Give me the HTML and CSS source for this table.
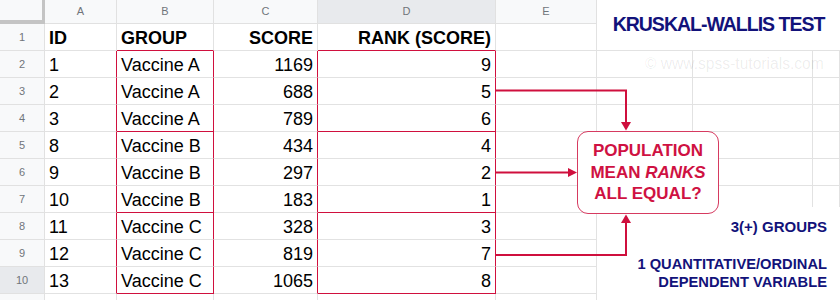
FILE: index.html
```html
<!DOCTYPE html>
<html>
<head>
<meta charset="utf-8">
<link rel="stylesheet" href="styles.css">
</head>
<body>
<div class="stage">
  <div class="sheet">
    <div class="corner"></div>
    <div class="ch">A</div><div class="ch">B</div><div class="ch">C</div><div class="ch sel">D</div><div class="ch">E</div><div class="ch blank"></div><div class="ch blank"></div><div class="ch blank"></div>

    <div class="rh">1</div>
    <div class="c b">ID</div><div class="c b rb">GROUP</div><div class="c b r">SCORE</div><div class="c b r rb">RANK (SCORE)</div><div class="c"></div><div class="c"></div><div class="c"></div><div class="c"></div>

    <div class="rh">2</div>
    <div class="c rr">1</div><div class="c rr">Vaccine A</div><div class="c r rr">1169</div><div class="c r rr">9</div><div class="c"></div><div class="c"></div><div class="c"></div><div class="c"></div>

    <div class="rh">3</div>
    <div class="c rr">2</div><div class="c rr">Vaccine A</div><div class="c r rr">688</div><div class="c r rr">5</div><div class="c"></div><div class="c"></div><div class="c"></div><div class="c"></div>

    <div class="rh">4</div>
    <div class="c rr">3</div><div class="c rr rb">Vaccine A</div><div class="c r rr">789</div><div class="c r rr rb">6</div><div class="c"></div><div class="c"></div><div class="c"></div><div class="c"></div>

    <div class="rh">5</div>
    <div class="c rr">8</div><div class="c rr">Vaccine B</div><div class="c r rr">434</div><div class="c r rr">4</div><div class="c"></div><div class="c"></div><div class="c"></div><div class="c"></div>

    <div class="rh">6</div>
    <div class="c rr">9</div><div class="c rr">Vaccine B</div><div class="c r rr">297</div><div class="c r rr">2</div><div class="c"></div><div class="c"></div><div class="c"></div><div class="c"></div>

    <div class="rh">7</div>
    <div class="c rr">10</div><div class="c rr rb">Vaccine B</div><div class="c r rr">183</div><div class="c r rr rb">1</div><div class="c"></div><div class="c"></div><div class="c"></div><div class="c"></div>

    <div class="rh">8</div>
    <div class="c rr">11</div><div class="c rr">Vaccine C</div><div class="c r rr">328</div><div class="c r rr">3</div><div class="c"></div><div class="c"></div><div class="c"></div><div class="c"></div>

    <div class="rh">9</div>
    <div class="c rr">12</div><div class="c rr">Vaccine C</div><div class="c r rr">819</div><div class="c r rr">7</div><div class="c"></div><div class="c"></div><div class="c"></div><div class="c"></div>

    <div class="rh sel">10</div>
    <div class="c rr">13</div><div class="c rr rb">Vaccine C</div><div class="c r rr">1065</div><div class="c r rr rb">8</div><div class="c"></div><div class="c"></div><div class="c"></div><div class="c"></div>

    <div class="rh"></div>
    <div class="c"></div><div class="c"></div><div class="c"></div><div class="c"></div><div class="c"></div><div class="c"></div><div class="c"></div><div class="c"></div>
  </div>

  <div class="title">KRUSKAL-WALLIS TEST</div>
  <div class="watermark">© www.spss-tutorials.com</div>

  <div class="notes">
    <p class="n1">3(+) GROUPS</p>
    <p class="n2">1 QUANTITATIVE/ORDINAL<br>DEPENDENT VARIABLE</p>
  </div>

  <div class="hyp"><div class="hyp-text">POPULATION<br>MEAN <i>RANKS</i><br>ALL EQUAL?</div></div>

  <svg class="arrows" width="840" height="300" viewBox="0 0 840 300">
    <g fill="none" stroke="#cf0f3d" stroke-width="2">
      <path d="M496 90.5 H626 V123"/>
      <path d="M496 172.5 H569"/>
      <path d="M496 255 H626 V222"/>
    </g>
    <g fill="#cf0f3d">
      <polygon points="621,122 631,122 626,130.5"/>
      <polygon points="568,168 568,177 577,172.5"/>
      <polygon points="621,223 631,223 626,214.5"/>
    </g>
  </svg>
</div>
</body>
</html>
```
FILE: styles.css
```css
html, body {
  margin: 0;
  padding: 0;
  background: #fff;
}

.stage {
  position: relative;
  width: 840px;
  height: 300px;
  overflow: hidden;
  font-family: "Liberation Sans", Arial, sans-serif;
}

.sheet {
  display: grid;
  grid-template-columns: 45px 72px 97px 104px 178px 101px 96px 120px 27px;
  grid-template-rows: 24px repeat(11, 27px);
}

.sheet > div {
  box-sizing: border-box;
}

.corner {
  background: #f8f9fa;
  border-right: 3px solid #c4c4c4;
  border-bottom: 4px solid #c4c4c4;
}

.ch {
  background: #f8f9fa;
  border-right: 1px solid #e1e1e1;
  border-bottom: 1px solid #e1e1e1;
  color: #70757a;
  font-size: 11px;
  line-height: 23px;
  text-align: center;
}

.ch.sel {
  background: #e8eaed;
}

.ch.blank {
  background: #fff;
}

.rh {
  background: #f8f9fa;
  border-right: 1px solid #e1e1e1;
  border-bottom: 1px solid #e1e1e1;
  color: #70757a;
  font-size: 11px;
  line-height: 26px;
  text-align: center;
}

.rh.sel {
  background: #e8eaed;
}

.c {
  border-right: 1px solid #e2e2e2;
  border-bottom: 1px solid #e2e2e2;
  font-size: 18px;
  line-height: 26px;
  padding: 1px 4px 0 4px;
  color: #000;
  white-space: nowrap;
}

.c.b {
  font-weight: bold;
}

.c.r {
  text-align: right;
}

.c.rr {
  border-right-color: #d0103e;
}

.c.rb {
  border-bottom-color: #d0103e;
}

.title {
  position: absolute;
  left: 597px;
  top: 0;
  width: 243px;
  height: 50px;
  box-sizing: border-box;
  padding-top: 13px;
  background: #fff;
  color: #12127a;
  font-weight: bold;
  font-size: 19.5px;
  line-height: 22px;
  letter-spacing: -1px;
  text-align: center;
}

.watermark {
  position: absolute;
  left: 645px;
  top: 55px;
  font-size: 15.6px;
  line-height: 18px;
  color: rgba(0, 0, 0, 0.08);
  white-space: nowrap;
}

.notes {
  position: absolute;
  left: 597px;
  top: 207px;
  width: 243px;
  height: 93px;
  box-sizing: border-box;
  padding: 10.5px 13px 0 0;
  background: #fff;
  color: #12127a;
  font-weight: bold;
  text-align: right;
}

.notes p {
  margin: 0;
}

.n1 {
  font-size: 15px;
  line-height: 18px;
}

.notes .n2 {
  margin-top: 19px;
  font-size: 14.7px;
  line-height: 18.3px;
}

.hyp {
  position: absolute;
  left: 577px;
  top: 131px;
  width: 142px;
  height: 83px;
  box-sizing: border-box;
  border: 1.5px solid #d63a60;
  border-radius: 11px;
  background: #fff;
  display: flex;
  align-items: center;
  justify-content: center;
}

.hyp-text {
  color: #cf1142;
  font-weight: bold;
  font-size: 17px;
  line-height: 21.5px;
  text-align: center;
}

.hyp-text i {
  font-style: italic;
}

.arrows {
  position: absolute;
  left: 0;
  top: 0;
}
```
